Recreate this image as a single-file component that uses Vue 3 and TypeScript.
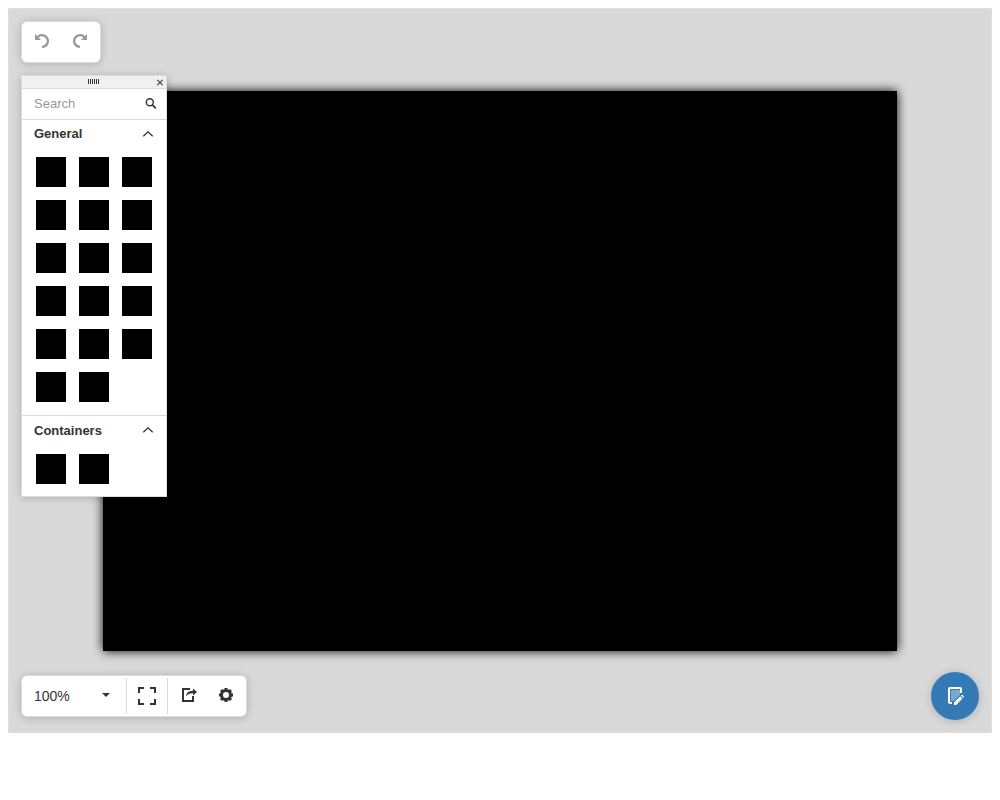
<script setup lang="ts">
import { reactive, ref } from 'vue'

interface ShapeGroup {
  title: string
  count: number
  open: boolean
}

const groups = reactive<ShapeGroup[]>([
  { title: 'General', count: 17, open: true },
  { title: 'Containers', count: 2, open: true },
])
const query = ref('')
const zoom = ref('100%')
const zoomLevels: string[] = ['50%', '75%', '100%', '150%', '200%']
</script>

<template>
  <main class="diagram">
    <div class="page"></div>

    <div class="toolbar history" role="toolbar" aria-label="History">
      <button type="button" class="tool muted" aria-label="Undo">
        <svg width="16" height="16" viewBox="0 0 16 16">
          <path d="M1 1v6h6L4.680 4.680A4.700 4.700 0 1 1 8 12.700V15A7 7 0 1 0 3.050 3.050Z" fill="currentColor" />
        </svg>
      </button>
      <button type="button" class="tool muted" aria-label="Redo">
        <svg width="16" height="16" viewBox="0 0 16 16">
          <path d="M15 1v6H9l2.320-2.320A4.700 4.700 0 1 0 8 12.700V15A7 7 0 1 1 12.950 3.050Z" fill="currentColor" />
        </svg>
      </button>
    </div>

    <aside class="toolbox">
      <header class="grip">
        <svg width="12" height="5" viewBox="0 0 12 5">
          <path d="M0 0h1v5H0zM2 0h1v5H2zM4 0h1v5H4zM6 0h1v5H6zM8 0h1v5H8zM10 0h1v5h-1z" fill="#333" />
        </svg>
        <button type="button" class="close" aria-label="Close">
          <svg width="8" height="8" viewBox="0 0 8 8">
            <path d="M1.300 1.800l5.400 5.400M6.700 1.800L1.300 7.200" stroke="#444" stroke-width="1.200" />
          </svg>
        </button>
      </header>
      <label class="search">
        <input v-model="query" type="text" placeholder="Search" aria-label="Search" />
        <svg width="12" height="12" viewBox="0 0 12 12" fill="none" stroke="#333">
          <circle cx="4.800" cy="5.300" r="3.500" stroke-width="1.400" />
          <path d="M7.400 7.900l3.400 3.400" stroke-width="1.700" />
        </svg>
      </label>
      <section v-for="group in groups" :key="group.title" class="group">
        <button type="button" class="title" :aria-expanded="group.open" @click="group.open = !group.open">
          <span>{{ group.title }}</span>
          <svg width="12" height="8" viewBox="0 0 12 8" fill="none" stroke="#333" stroke-width="1.300">
            <path d="M1.300 6.300L6 1.800l4.700 4.500" />
          </svg>
        </button>
        <div v-if="group.open" class="shapes">
          <i v-for="n in group.count" :key="n" class="shape"></i>
        </div>
      </section>
    </aside>

    <div class="toolbar view" role="toolbar" aria-label="View">
      <label class="zoom">
        <select v-model="zoom" aria-label="Zoom level">
          <option v-for="level in zoomLevels" :key="level">{{ level }}</option>
        </select>
        <svg width="8" height="8" viewBox="0 0 8 8"><path d="M0 1h8L4 5z" fill="#333" /></svg>
      </label>
      <span class="divider"></span>
      <button type="button" class="tool wide" aria-label="Full screen">
        <svg width="18" height="18" viewBox="0 0 18 18" fill="none" stroke="#333" stroke-width="2">
          <path d="M1 6V1h5M12 1h5v5M17 12v5h-5M6 17H1v-5" />
        </svg>
      </button>
      <span class="divider"></span>
      <div class="pair">
        <button type="button" class="tool" aria-label="Export">
          <svg width="16" height="16" viewBox="0 0 16 16">
            <path d="M1 1h8v2H3v10h8V9h2v6H1Z" fill="#333" />
            <path d="M5.200 9.500C5.400 5.500 7.400 4 12 3.800V1.500L16 5l-4 3.500V6.200C8.500 6.200 6.600 7 5.200 9.500Z" fill="#333" />
          </svg>
        </button>
        <button type="button" class="tool" aria-label="Settings">
          <svg width="14" height="14" viewBox="0 0 14 14" fill="none" stroke="#333">
            <circle cx="7" cy="7" r="4.500" stroke-width="3" />
            <path d="M7 0v2M7 12v2M0 7h2M12 7h2M2 2l1.500 1.500M10.500 10.500L12 12M2 12l1.500-1.500M10.500 3.500L12 2" stroke-width="3" />
          </svg>
        </button>
      </div>
    </div>

    <button type="button" class="fab" aria-label="Properties">
      <svg width="18" height="18" viewBox="0 0 18 18">
        <path d="M5 3h9v5l-6 6H5z" fill="#fff" opacity="0.350" />
        <path d="M15 6V2Q15 1 14 1H4Q3 1 3 2v13Q3 16 4 16h2" fill="none" stroke="#fff" stroke-width="2" />
        <path d="M8 15.500l6.300-6.300 2.200 2.200L10.200 18H8zM15 8.500l.6-.6q.5-.4 1 0l1.200 1.200q.4.500 0 1l-.6.600z" fill="#fff" />
      </svg>
    </button>
  </main>
</template>

<style>
body {
  margin: 8px;
  background: #fff;
}
</style>

<style scoped>
.diagram {
  position: relative;
  box-sizing: border-box;
  padding: 82px 94px 81px;
  border: 1px solid #ddd;
  background: #d9d9d9;
  color: #333;
  font-family: "Liberation Sans", Arial, sans-serif;
}
.page {
  height: 560px;
  background: #000;
  box-shadow: 0 0 10px #000;
}
button {
  display: flex;
  align-items: center;
  justify-content: center;
  margin: 0;
  padding: 0;
  border: 0;
  background: none;
  color: inherit;
  font: inherit;
  cursor: pointer;
}
svg {
  display: block;
  flex: none;
}
.toolbar,
.toolbox {
  position: absolute;
  left: 12px;
  border: 1px solid #ddd;
  background: #fff;
  box-shadow: 0 1px 8px rgba(0, 0, 0, 0.2);
}
.toolbar {
  display: flex;
  align-items: center;
  box-sizing: border-box;
  height: 42px;
  border-radius: 6px;
}
.history {
  top: 12px;
  gap: 2px;
  padding: 0 2px 2px;
}
.tool {
  width: 36px;
  height: 36px;
}
.muted {
  color: #999;
}
.toolbox {
  top: 66px;
  width: 144px;
}
.grip {
  position: relative;
  display: flex;
  align-items: flex-start;
  justify-content: center;
  box-sizing: border-box;
  height: 13px;
  padding-top: 3px;
  background: #f0f0f0;
  border-bottom: 1px solid #d9d9d9;
}
.close {
  position: absolute;
  top: 2px;
  right: 2px;
}
.search {
  display: flex;
  align-items: center;
  box-sizing: border-box;
  height: 30px;
  padding: 0 9px 2px 12px;
}
.search input {
  flex: 1;
  min-width: 0;
  padding: 0;
  border: 0;
  outline: 0;
  background: none;
  color: #333;
  font: 13px "Liberation Sans", Arial, sans-serif;
}
.search input::placeholder {
  color: #999;
}
.group {
  border-top: 1px solid #d9d9d9;
}
.title {
  justify-content: space-between;
  width: 100%;
  height: 27px;
  padding: 0 12px;
  font-size: 13px;
  font-weight: bold;
}
.shapes {
  display: grid;
  grid-template-columns: repeat(3, 30px);
  gap: 13px;
  padding: 10px 14px 13px;
}
.group:last-child .title {
  height: 28px;
}
.group:last-child .shapes {
  padding-bottom: 12px;
}
.shape {
  height: 30px;
  background: #000;
}
.view {
  bottom: 15px;
}
.zoom {
  display: flex;
  align-items: center;
  height: 36px;
  padding: 0 16px 0 12px;
}
.zoom select {
  width: 68px;
  height: 36px;
  padding: 0;
  border: 0;
  outline: 0;
  appearance: none;
  background: none;
  color: #333;
  font: 14px "Liberation Sans", Arial, sans-serif;
}
.divider {
  width: 1px;
  height: 36px;
  background: #d9d9d9;
}
.wide {
  width: 40px;
}
.pair {
  display: flex;
  gap: 1px;
  padding: 0 2px 2px 3px;
}
.fab {
  position: absolute;
  right: 12px;
  bottom: 12px;
  width: 48px;
  height: 48px;
  border-radius: 50%;
  background: #337ab7;
  box-shadow: 0 1px 8px rgba(0, 0, 0, 0.2);
}
</style>
